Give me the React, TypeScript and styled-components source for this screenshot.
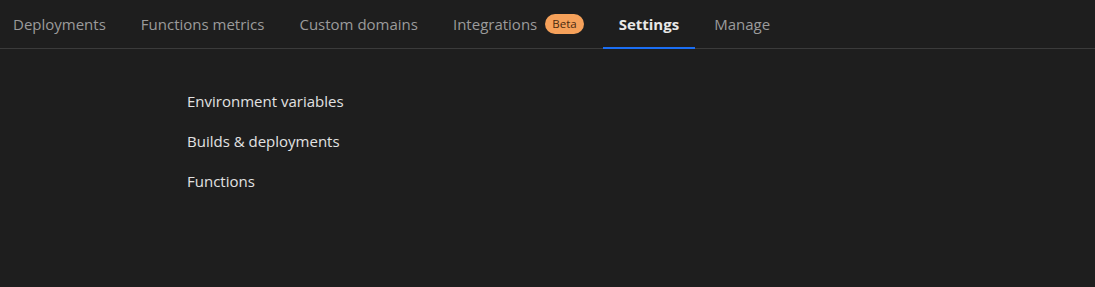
import * as React from 'react'
import styled, { createGlobalStyle } from 'styled-components'

const GlobalStyle = createGlobalStyle`
  html, body {
    margin: 0;
    padding: 0;
    background: #1e1e1e;
    font-family: 'Open Sans', 'Noto Sans', sans-serif;
  }
`

const Page = styled.div`
  width: 1095px;
  height: 287px;
  background: #1e1e1e;
  overflow: hidden;
`

const TabBar = styled.nav`
  display: flex;
  align-items: stretch;
  gap: 3px;
  height: 48px;
  border-bottom: 1px solid #3b3b3b;
  margin-left: -3px;
`

const Tab = styled.div<{ active?: boolean }>`
  display: flex;
  align-items: center;
  gap: 8px;
  padding: 0 16px;
  font-size: 15px;
  font-weight: ${p => (p.active ? 700 : 400)};
  color: ${p => (p.active ? '#e8e8e8' : '#9b9b9b')};
  border-bottom: 2px solid ${p => (p.active ? '#1b6ef3' : 'transparent')};
  margin-bottom: -1px;
  white-space: nowrap;
`

const Badge = styled.span`
  display: inline-flex;
  align-items: center;
  height: 20px;
  padding: 0 7px;
  border-radius: 10px;
  background: #f6a15a;
  color: #4a2a10;
  font-size: 11.5px;
  font-weight: 400;
`

const Content = styled.div`
  padding: 32px 0 0 187px;
  display: flex;
  flex-direction: column;
`

const Item = styled.div`
  height: 40px;
  line-height: 40px;
  font-size: 15px;
  color: #e2e2e2;
`

const tabs = ['Deployments', 'Functions metrics', 'Custom domains', 'Integrations', 'Settings', 'Manage']
const items = ['Environment variables', 'Builds & deployments', 'Functions']

export default function App() {
  return (
    <Page>
      <GlobalStyle />
      <TabBar>
        {tabs.map(t => (
          <Tab key={t} active={t === 'Settings'}>
            {t}
            {t === 'Integrations' && <Badge>Beta</Badge>}
          </Tab>
        ))}
      </TabBar>
      <Content>
        {items.map(i => (
          <Item key={i}>{i}</Item>
        ))}
      </Content>
    </Page>
  )
}
